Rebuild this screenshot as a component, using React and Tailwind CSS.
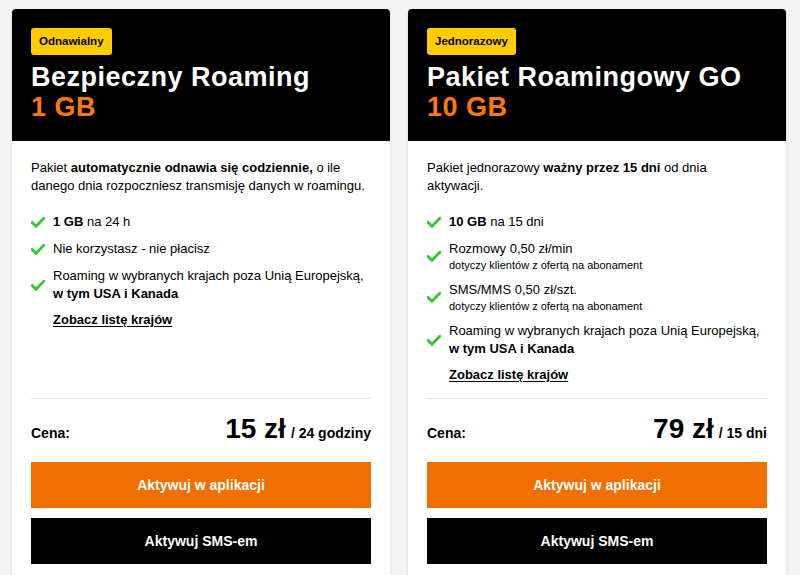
import React from 'react';

const plans = [
  {
    badge: 'Odnawialny',
    title: 'Bezpieczny Roaming',
    size: '1 GB',
    desc: [
      <>Pakiet <b>automatycznie odnawia się codziennie,</b> o ile</>,
      <>danego dnia rozpoczniesz transmisję danych w roamingu.</>,
    ],
    items: [
      { lines: [<><b>1 GB</b> na 24 h</>] },
      { lines: [<>Nie korzystasz - nie płacisz</>] },
      { lines: [<>Roaming w wybranych krajach poza Unią Europejską,</>, <b>w tym USA i Kanada</b>] },
    ],
    price: '15 zł',
    period: '/ 24 godziny',
  },
  {
    badge: 'Jednorazowy',
    title: 'Pakiet Roamingowy GO',
    size: '10 GB',
    desc: [
      <>Pakiet jednorazowy <b>ważny przez 15 dni</b> od dnia</>,
      <>aktywacji.</>,
    ],
    items: [
      { lines: [<><b>10 GB</b> na 15 dni</>] },
      { lines: [<>Rozmowy 0,50 zł/min</>], note: 'dotyczy klientów z ofertą na abonament' },
      { lines: [<>SMS/MMS 0,50 zł/szt.</>], note: 'dotyczy klientów z ofertą na abonament' },
      { lines: [<>Roaming w wybranych krajach poza Unią Europejską,</>, <b>w tym USA i Kanada</b>] },
    ],
    price: '79 zł',
    period: '/ 15 dni',
  },
];

function Check() {
  return (
    <svg width="14" height="11" viewBox="0 0 14 11" className="shrink-0">
      <path d="M1.2 5.6 L5 9.3 L12.8 1.2" fill="none" stroke="#32c832" strokeWidth="2.8" strokeLinecap="square" />
    </svg>
  );
}

function PlanCard({ plan }) {
  return (
    <div className="w-[378px] flex flex-col bg-white rounded-[4px] overflow-hidden shadow-[0_1px_3px_rgba(0,0,0,0.12)]">
      <div className="bg-black px-[19px] pt-[19px] pb-[19px]">
        <span className="inline-block bg-[#ffcc00] text-black text-[11.5px] font-bold leading-[27px] px-[8px] rounded-[3px]">
          {plan.badge}
        </span>
        <h2 className="mt-[7px] text-white text-[27px] tracking-[0.5px] font-bold leading-[30px]">{plan.title}</h2>
        <div className="text-[#ff7900] text-[27px] tracking-[0.5px] font-bold leading-[30px]">{plan.size}</div>
      </div>

      <div className="flex-1 flex flex-col px-[19px] pt-[18px] pb-[24px] text-[13px] leading-[18px] text-black">
        <p>
          {plan.desc[0]}
          <br />
          {plan.desc[1]}
        </p>

        <ul className="mt-[18px] flex flex-col gap-[9px]">
          {plan.items.map((item, i) => (
            <li key={i} className="flex items-center gap-[8px]">
              <Check />
              <div>
                {item.lines.map((l, j) => (
                  <div key={j}>{l}</div>
                ))}
                {item.note && <div className="text-[11px] leading-[14px]">{item.note}</div>}
              </div>
            </li>
          ))}
        </ul>

        <a href="#" className="mt-[8px] ml-[22px] font-bold underline underline-offset-2 self-start">
          Zobacz listę krajów
        </a>

        <div className="mt-auto pt-[14px]">
          <div className="border-t border-[#e4e4e4] pt-[14px] flex items-baseline justify-between">
            <span className="text-[14px] font-bold">Cena:</span>
            <span className="font-bold">
              <span className="text-[28px] leading-[32px]">{plan.price}</span>
              <span className="text-[14px] ml-[5px]">{plan.period}</span>
            </span>
          </div>
          <button className="mt-[17px] w-full h-[46px] bg-[#f16e00] text-white text-[14px] font-bold">
            Aktywuj w aplikacji
          </button>
          <button className="mt-[10px] w-full h-[46px] bg-black text-white text-[14px] font-bold">
            Aktywuj SMS-em
          </button>
        </div>
      </div>
    </div>
  );
}

export default function App() {
  return (
    <div className="min-h-screen bg-[#f4f4f4] font-['Liberation_Sans',Arial,sans-serif]">
      <div className="flex gap-[18px] pl-[12px] pt-[9px]">
        {plans.map((p) => (
          <PlanCard key={p.title} plan={p} />
        ))}
      </div>
    </div>
  );
}
